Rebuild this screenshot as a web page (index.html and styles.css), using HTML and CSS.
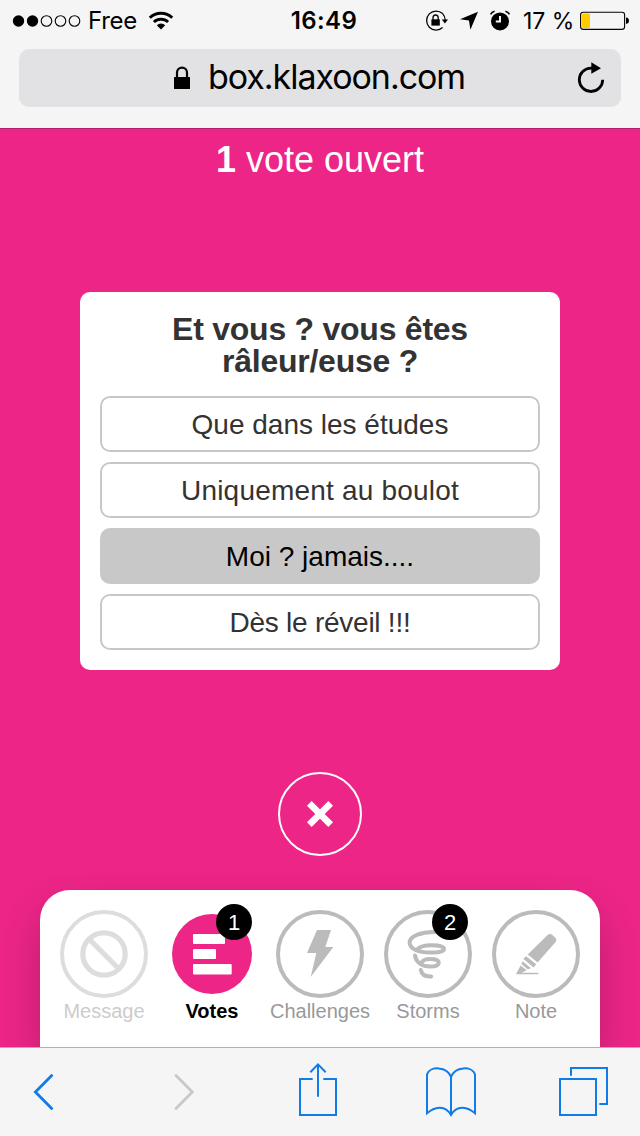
FILE: index.html
```html
<!DOCTYPE html>
<html lang="fr">
<head>
<meta charset="utf-8">
<meta name="viewport" content="width=device-width, initial-scale=1.0">
<title>Votes</title>
<link rel="stylesheet" href="styles.css">
</head>
<body>

<!-- Barre du navigateur -->
<header class="browser">
	<div class="status">
		<div class="status-left">
			<svg class="signal" width="70" height="14" viewBox="0 0 70 14">
				<circle cx="6.5" cy="7" r="5.7"/>
				<circle cx="20.5" cy="7" r="5.7"/>
				<circle class="off" cx="34.5" cy="7" r="5.3"/>
				<circle class="off" cx="48.5" cy="7" r="5.3"/>
				<circle class="off" cx="62.5" cy="7" r="5.3"/>
			</svg>
			<span class="carrier">Free</span>
			<svg class="wifi" width="26" height="20" viewBox="0 0 26 20">
				<path class="line" d="M1.8 6.8 A16 16 0 0 1 24.2 6.8 M5.9 11 A10.3 10.3 0 0 1 20.1 11"/>
				<path d="M8.8 14.2 A6 6 0 0 1 17.2 14.2 L13 18.6 Z"/>
			</svg>
		</div>
		<div class="time">16:49</div>
		<div class="status-right">
			<svg width="24" height="24" viewBox="0 0 24 24">
				<path class="thin" d="M18.6 4.6 A9.5 9.5 0 1 0 18.6 18.5 M18.6 4.6 Q21 7 21.2 11"/>
				<path d="M17.8 10.6 H24 L20.9 14.4 Z"/>
				<rect x="7.4" y="10.3" width="8.4" height="6.3"/>
				<path class="thin" d="M9 11 V8.9 A2.6 2.9 0 0 1 14.2 8.9 V11"/>
			</svg>
			<svg class="loc" width="20" height="20" viewBox="0 0 20 20">
				<path d="M1 8.2 L19 0.8 L11.4 18.8 L10 9.6 Z"/>
			</svg>
			<svg class="alarm" width="22" height="22" viewBox="0 0 22 22">
				<circle cx="11" cy="11.4" r="9"/>
				<path class="hand" d="M11 6 V11.6 H6.8"/>
				<path class="line-s" d="M1.6 4.4 A6 6 0 0 1 5.6 1.3 M16.4 1.3 A6 6 0 0 1 20.4 4.4"/>
			</svg>
			<span class="percent">17 %</span>
			<svg width="50" height="20" viewBox="0 0 50 20">
				<rect class="cell" x="0.6" y="1.2" width="44" height="17.2" rx="2.6"/>
				<rect class="charge" x="2" y="2.6" width="8" height="14.4" rx="1"/>
				<path d="M46 6.6 Q49 6.9 49 9.8 Q49 12.6 46 13 Z"/>
			</svg>
		</div>
	</div>
	<div class="address">
		<svg class="lock" width="18" height="24" viewBox="0 0 18 24">
			<rect x="1" y="11" width="16" height="12" rx="0.5"/>
			<path d="M4 12 V6.6 A5 5 0 0 1 14 6.6 V12"/>
		</svg>
		<span class="url">box.klaxoon.com</span>
		<svg class="reload" width="28" height="32" viewBox="0 0 28 32">
			<path class="arc" d="M25.7 17.8 A11.7 11.7 0 1 1 14 6.1 H16"/>
			<path d="M14.3 0.2 L24 6.2 L14.3 11.8 Z"/>
		</svg>
	</div>
</header>

<main class="page">
	<div class="heading"><b>1</b> vote ouvert</div>

	<div class="card">
		<h1>Et vous ? vous êtes râleur/euse ?</h1>
		<button class="option">Que dans les études</button>
		<button class="option wide">Uniquement au boulot</button>
		<button class="option selected">Moi ? jamais....</button>
		<button class="option narrow">Dès le réveil !!!</button>
	</div>

	<button class="close">
		<svg width="28" height="28" viewBox="0 0 28 28">
			<path d="M3.3 3.3 L24.7 24.7 M24.7 3.3 L3.3 24.7"/>
		</svg>
	</button>

	<!-- Menu des activités -->
	<nav class="dock">
		<a class="item disabled">
			<svg width="88" height="88" viewBox="0 0 88 88">
				<circle class="ring" cx="44" cy="44" r="42"/>
				<circle class="ban" cx="44" cy="44" r="21.2"/>
				<path class="ban-bar" d="M29 29 L59 59"/>
			</svg>
			<span>Message</span>
		</a>
		<a class="item active">
			<svg width="88" height="88" viewBox="0 0 88 88">
				<circle class="disc" cx="44" cy="44" r="40"/>
				<g class="bars">
					<rect x="25" y="24" width="32" height="10" rx="1"/>
					<rect x="25" y="39" width="23" height="10" rx="1"/>
					<rect x="25" y="54" width="38.7" height="10.4" rx="1"/>
				</g>
			</svg>
			<i class="badge">1</i>
			<span>Votes</span>
		</a>
		<a class="item">
			<svg width="88" height="88" viewBox="0 0 88 88">
				<circle class="ring" cx="44" cy="44" r="42"/>
				<path class="shape" d="M41 20 H55 L49.3 37 H57.3 L34.7 67 L40.3 43 H31 Z"/>
			</svg>
			<span>Challenges</span>
		</a>
		<a class="item">
			<svg width="88" height="88" viewBox="0 0 88 88">
				<circle class="ring" cx="44" cy="44" r="42"/>
				<path class="swirl" d="M52 22 C38 21.4 25.6 26 25.6 32.5 C25.6 39 35 42.6 46 42.6 C54.5 42.6 60 41.4 60 38.9 C60 36.3 54 35.2 47 35.2 C41 35.2 36 36.4 33.4 39.2"/>
				<path class="swirl" d="M31 45.4 C32 52.5 38 56.6 46.4 56.6 C51.6 56.6 54.8 55 54.8 52.6 C54.8 50.2 51 49 46 49 C42 49 39 50 37.8 52.4"/>
				<path class="swirl" d="M36.8 60 C37.8 64.6 41.6 66.8 47.2 66.4"/>
			</svg>
			<i class="badge">2</i>
			<span>Storms</span>
		</a>
		<a class="item">
			<svg width="88" height="88" viewBox="0 0 88 88">
				<circle class="ring" cx="44" cy="44" r="42"/>
				<path class="shape" d="M35.7 44.6 L55.6 25 Q58 23 60.2 24.8 L63.8 28.2 Q65 30 63.6 32 L45.6 52.4 Z"/>
				<path class="shape" d="M34.2 46.2 L44.2 54.2 L41.6 57.6 L31.3 48.8 Z"/>
				<path class="shape" d="M30.4 51.2 L38.8 58 L36 59.4 L29.4 54 Z"/>
				<path class="shape" d="M28.6 55.6 L34.8 60.2 L29.4 62.8 H46.3 V64.2 H24 Z"/>
			</svg>
			<span>Note</span>
		</a>
	</nav>
</main>

<!-- Barre d'outils -->
<footer class="toolbar">
	<svg class="back" width="22" height="38" viewBox="0 0 22 38">
		<path d="M18.7 2.4 L2.4 19 L18.7 35.6"/>
	</svg>
	<svg class="forward" width="22" height="38" viewBox="0 0 22 38">
		<path d="M3 2.4 L19.3 19 L3 35.6"/>
	</svg>
	<svg class="share" width="40" height="56" viewBox="0 0 40 56">
		<path d="M14.7 17 H2 V53 H38 V17 H25.3 M20 2 V34.7 M12.3 10.3 L20 2.4 L27.7 10.3"/>
	</svg>
	<svg class="book" width="52" height="52" viewBox="0 0 52 52">
		<path d="M26 11 C22 0 5 0 2 8.3 V47.3 C9 41 20 38 26 49 C32 38 43 41 50 47.3 V8.3 C47 0 30 0 26 11 V49"/>
	</svg>
	<svg class="tabs" width="51" height="52" viewBox="0 0 51 52">
		<path d="M2 13 H38 V49 H2 Z M13 9.7 V2 H49 V38 H41.3"/>
	</svg>
</footer>

</body>
</html>
```

FILE: styles.css
```css
* {
  box-sizing: border-box;
}
body {
  margin: 0;
  height: 1136px;
  display: flex;
  flex-direction: column;
  overflow: hidden;
  background: #f5f5f6;
  font-family: "Liberation Sans", Arial, sans-serif;
}
svg {
  display: block;
  flex: none;
}
button {
  font-family: inherit;
  padding: 0;
}


.browser {
  height: 128px;
  flex: none;
  font-family: Inter, sans-serif;
  color: #030303;
}
.status {
  display: grid;
  grid-template-columns: 1fr auto 1fr;
  align-items: center;
  height: 41px;
  padding: 0 10px 0 12px;
  font-size: 23px;
}
.status-left, .status-right {
  display: flex;
  align-items: center;
}
.status-right {
  justify-content: flex-end;
}
.signal .off, .cell {
  fill: none;
  stroke: #030303;
  stroke-width: 1.1;
}
.carrier {
  width: 53px;
  margin-left: 6px;
  font-size: 24px;
  letter-spacing: -0.3px;
}
.wifi {
  margin-left: 7px;
}
.line {
  fill: none;
  stroke: #030303;
  stroke-width: 3;
}
.line-s {
  fill: none;
  stroke: #030303;
  stroke-width: 1.6;
}
.thin {
  fill: none;
  stroke: #030303;
  stroke-width: 1.3;
}
.hand {
  fill: none;
  stroke: #f5f5f6;
  stroke-width: 2;
}
.time {
  padding-left: 6px;
  font-size: 24px;
  font-weight: 600;
  letter-spacing: 0.4px;
}
.loc {
  margin-left: 11px;
}
.alarm {
  margin-left: 10px;
}
.percent {
  width: 57px;
  margin-left: 12px;
  white-space: nowrap;
}
.charge {
  fill: #ffcc00;
}


.address {
  display: flex;
  align-items: center;
  height: 58px;
  margin: 8px 19px 0;
  padding: 0 16px 0 154px;
  border-radius: 10px;
  background: #e2e2e4;
}
.lock path {
  fill: none;
  stroke: #030303;
  stroke-width: 2.2;
}
.url {
  margin: -3px 0 0 17px;
  font-size: 34px;
  letter-spacing: -1.05px;
}
.reload {
  margin-left: auto;
}
.arc {
  fill: none;
  stroke: #030303;
  stroke-width: 2.8;
}


.page {
  display: flex;
  flex-direction: column;
  align-items: center;
  height: 919px;
  flex: none;
  overflow: hidden;
  border-top: 1px solid #b51e68;
  background: #ec2587;
}
.heading {
  margin-top: 10px;
  font-size: 36px;
  line-height: 42px;
  color: white;
}
.card {
  display: flex;
  flex-direction: column;
  gap: 10px;
  width: 480px;
  height: 378px;
  margin-top: 111px;
  padding: 21px 20px 20px;
  border-radius: 10px;
  background: white;
}
.card h1 {
  margin: 0 50px 9px;
  font-size: 32px;
  line-height: 32px;
  letter-spacing: -0.25px;
  text-align: center;
  color: #333;
}
.option {
  height: 56px;
  padding-top: 2px;
  border: 2px solid #c8c8c8;
  border-radius: 10px;
  background: white;
  font-size: 28px;
  color: #333;
}
.wide {
  letter-spacing: 0.2px;
}
.narrow {
  letter-spacing: -0.25px;
}
.selected {
  background: #c8c8c8;
  color: black;
}
.close {
  display: flex;
  align-items: center;
  justify-content: center;
  width: 84px;
  height: 84px;
  flex: none;
  margin-top: 102px;
  border: 2px solid white;
  border-radius: 50%;
  background: none;
}
.close path {
  stroke: white;
  stroke-width: 6.6;
}


.dock {
  display: flex;
  width: 560px;
  flex: 1;
  margin-top: 34px;
  padding: 20px 10px 0;
  border-radius: 30px 30px 0 0;
  background: white;
  box-shadow: 0 20px 40px rgba(0,0,0,0.2);
}
.item {
  position: relative;
  display: flex;
  flex-direction: column;
  align-items: center;
  width: 108px;
  font-size: 20px;
  line-height: 26px;
  color: #999;
}
.disabled {
  color: #ccc;
}
.active {
  font-weight: bold;
  color: black;
}
.badge {
  position: absolute;
  top: -6px;
  left: 58px;
  width: 36px;
  height: 36px;
  border-radius: 50%;
  background: black;
  color: white;
  font-size: 22px;
  font-style: normal;
  font-weight: normal;
  line-height: 37px;
  text-align: center;
}
.ring {
  fill: none;
  stroke: #bbb;
  stroke-width: 4;
}
.disabled .ring, .ban, .ban-bar {
  fill: none;
  stroke: #ddd;
}
.ban, .ban-bar {
  stroke-width: 5.2;
}
.disc {
  fill: #ec2587;
}
.bars {
  fill: white;
}
.shape {
  fill: #bbb;
}
.swirl {
  fill: none;
  stroke: #bbb;
  stroke-width: 4;
  stroke-linecap: round;
}


.toolbar {
  display: flex;
  align-items: center;
  height: 89px;
  flex: none;
  border-top: 1px solid #b2b2b2;
  background: #f5f5f6;
}
.toolbar path {
  fill: none;
  stroke: #117bea;
  stroke-width: 2;
}
.toolbar .back {
  margin-left: 33px;
}
.toolbar .forward {
  margin-left: 118px;
}
.toolbar .back path, .toolbar .forward path {
  stroke-width: 2.8;
  stroke-linecap: round;
}
.toolbar .forward path {
  stroke: #c8c8c8;
}
.share {
  margin-left: 103px;
  margin-bottom: 4px;
}
.book {
  margin-left: 87px;
}
.tabs {
  margin-left: 81px;
}
```
